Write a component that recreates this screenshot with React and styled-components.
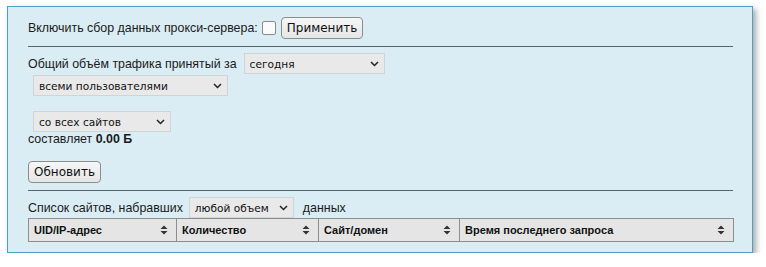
import React from "react";
import styled, { createGlobalStyle } from "styled-components";

const GlobalStyle = createGlobalStyle`
  html, body {
    margin: 0;
    padding: 0;
    background: #ffffff;
  }
  body {
    font-family: "Liberation Sans", Arial, sans-serif;
    font-size: 12.4px;
    color: #1a1a1a;
  }
`;

const Panel = styled.div`
  box-sizing: border-box;
  width: 746px;
  margin: 6px 0 0 7px;
  padding: 0 19px 10px 20px;
  background: #daedf4;
  border: 1px solid #4f9fc2;
  box-shadow: 3px 3px 6px rgba(0, 0, 0, 0.35);
`;

const Row = styled.div`
  display: flex;
  align-items: center;
  margin-top: ${(p) => p.$top || 0}px;
  height: ${(p) => p.$height || 21}px;
`;

const Label = styled.span`
  white-space: nowrap;
  line-height: 14px;
  margin-left: ${(p) => p.$left || 0}px;
`;

const Text = styled.div`
  line-height: 14px;
  margin-top: ${(p) => p.$top || 0}px;
`;

const Check = styled.input.attrs({ type: "checkbox" })`
  appearance: none;
  box-sizing: border-box;
  width: 14px;
  height: 14px;
  margin: 0 0 0 4px;
  background: #fbfbfb;
  border: 1px solid #8a8a8a;
  border-radius: 2px;
`;

const Button = styled.button`
  box-sizing: border-box;
  height: 22px;
  padding: 0 5px;
  margin: ${(p) => p.$margin || "0"};
  font-family: "DejaVu Sans", sans-serif;
  font-size: 12px;
  color: #111;
  background: linear-gradient(#f6f6f6, #e6e6e6);
  border: 1px solid #8c8c8c;
  border-radius: 4px;
`;

const Rule = styled.hr`
  border: none;
  border-top: 1px solid #55666f;
  margin: ${(p) => p.$top}px 0 0 0;
  height: 0;
`;

const SelectWrap = styled.div`
  position: relative;
  box-sizing: border-box;
  width: ${(p) => p.$width}px;
  height: 21px;
  margin-left: ${(p) => p.$left || 0}px;
  margin-top: ${(p) => p.$top || 0}px;
  flex: none;

  svg {
    position: absolute;
    right: 6px;
    top: 8px;
    pointer-events: none;
  }
`;

const Select = styled.select`
  appearance: none;
  box-sizing: border-box;
  width: 100%;
  height: 100%;
  padding: 0 0 0 5px;
  font-family: "DejaVu Sans", sans-serif;
  font-size: 10.6px;
  color: #111;
  background: #e9e9e9;
  border: 1px solid #cfd4d6;
  border-radius: 0;
`;

const Chevron = () => (
  <svg width="9" height="6" viewBox="0 0 9 6">
    <path d="M1 1 L4.5 4.5 L8 1" fill="none" stroke="#222" strokeWidth="1.5" />
  </svg>
);

const Dropdown = ({ width, left, top, value }) => (
  <SelectWrap $width={width} $left={left} $top={top}>
    <Select defaultValue={value}>
      <option>{value}</option>
    </Select>
    <Chevron />
  </SelectWrap>
);

const Table = styled.table`
  width: 705px;
  border-collapse: collapse;
  table-layout: fixed;
`;

const Th = styled.th`
  box-sizing: border-box;
  width: ${(p) => p.$width}px;
  height: 23px;
  padding: 0 8px 0 5px;
  background: #e5e5e5;
  border: 1px solid #8e8e8e;
  font-size: 11px;
  font-weight: bold;
  text-align: left;
  color: #111;
`;

const HeadCell = styled.div`
  display: flex;
  align-items: center;
  justify-content: space-between;
`;

const SortIcon = () => (
  <svg width="8" height="10" viewBox="0 0 8 10">
    <path d="M4 0.5 L7.5 4 L0.5 4 Z M4 9.5 L7.5 6 L0.5 6 Z" fill="#333" />
  </svg>
);

const columns = [
  { title: "UID/IP-адрес", width: 148 },
  { title: "Количество", width: 142 },
  { title: "Сайт/домен", width: 141 },
  { title: "Время последнего запроса", width: 274 },
];

export default function App() {
  return (
    <>
      <GlobalStyle />
      <Panel>
        <Row $top={10} $height={22}>
          <Label>Включить сбор данных прокси-сервера:</Label>
          <Check />
          <Button $margin="0 0 0 5px">Применить</Button>
        </Row>
        <Rule $top={7} />

        <Row $top={6}>
          <Label>Общий объём трафика принятый за</Label>
          <Dropdown width={141} left={7} value="сегодня" />
        </Row>
        <Dropdown width={195} left={5} top={1} value="всеми пользователями" />
        <Dropdown width={138} left={5} top={15} value="со всех сайтов" />
        <Text>
          составляет <b>0.00 Б</b>
        </Text>
        <Button $margin="15px 0 0 0">Обновить</Button>
        <Rule $top={7} />

        <Row $top={6}>
          <Label>Список сайтов, набравших</Label>
          <Dropdown width={105} left={6} value="любой объем" />
          <Label $left={9}>данных</Label>
        </Row>
        <Table>
          <thead>
            <tr>
              {columns.map((c) => (
                <Th key={c.title} $width={c.width}>
                  <HeadCell>
                    <span>{c.title}</span>
                    <SortIcon />
                  </HeadCell>
                </Th>
              ))}
            </tr>
          </thead>
        </Table>
      </Panel>
    </>
  );
}
